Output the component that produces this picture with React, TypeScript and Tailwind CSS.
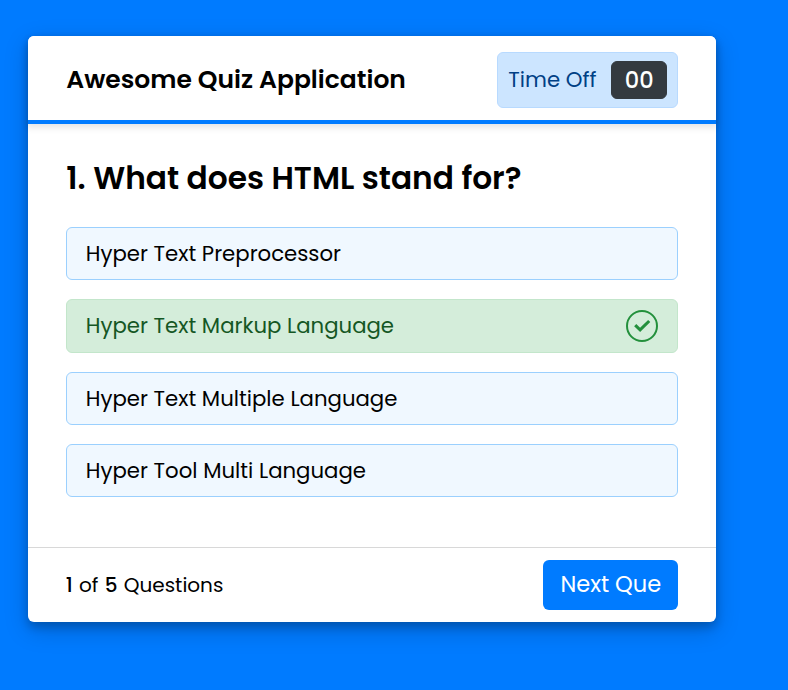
const options = [
  { text: 'Hyper Text Preprocessor', correct: false },
  { text: 'Hyper Text Markup Language', correct: true },
  { text: 'Hyper Text Multiple Language', correct: false },
  { text: 'Hyper Tool Multi Language', correct: false },
];

function CheckIcon() {
  return (
    <svg width="32" height="32" viewBox="0 0 32 32" fill="none" className="shrink-0">
      <circle cx="16" cy="16" r="15" stroke="#23903c" strokeWidth="2" />
      <path d="M9.2 15.2 L14.1 19.8 L23.2 11" stroke="#23903c" strokeWidth="3.1" />
    </svg>
  );
}

export default function App() {
  return (
    <main className="h-[690px] w-[788px] overflow-hidden bg-[#007bff] pl-[28.3px] pt-[36px] font-['Poppins','Inter',sans-serif] text-black">
      <section className="flex h-[586.3px] w-[688px] flex-col rounded-[6px] bg-white shadow-[0_5px_10px_rgba(0,0,0,0.2),0_7.5px_25px_rgba(0,0,0,0.19)]">
        <header className="flex h-[88px] shrink-0 items-center justify-between rounded-t-[6px] border-b-4 border-[#007bff] bg-white px-[38px] pt-[4px] shadow-[0_3px_6px_1px_rgba(0,0,0,0.1)]">
          <h1 className="whitespace-nowrap pb-[2px] text-[25px] leading-none font-semibold">Awesome Quiz Application</h1>
          <div className="flex h-[56px] w-[181px] items-center justify-between rounded-[6px] border border-[#b8daff] bg-[#cce5ff] px-[10px]">
            <span className="whitespace-nowrap text-[21.25px] text-[#004085]">Time Off</span>
            <span className="flex h-[38px] w-[56px] items-center justify-center rounded-[6px] border border-[#343a40] bg-[#343a40] pt-[2px] text-[22.5px] font-medium text-white">00</span>
          </div>
        </header>
        <div className="flex grow flex-col px-[38px] pt-[32px]">
          <h2 className="flex h-[44px] items-center whitespace-nowrap pt-[2px] text-[31.25px] leading-none font-semibold">1. What does HTML stand for?</h2>
          <div className="mt-[26.9px] flex flex-col gap-[19.1px]">
            {options.map((o) => (
              <div
                key={o.text}
                className={`flex h-[53.3px] items-center justify-between rounded-[6px] border pl-[18.5px] pr-[19px] pt-[0.6px] text-[21.25px] ${
                  o.correct ? 'border-[#c3e6cb] bg-[#d4edda] text-[#155724]' : 'border-[#9bd0fe] bg-[#f0f8ff]'
                }`}
              >
                <span className="whitespace-nowrap">{o.text}</span>
                {o.correct && <CheckIcon />}
              </div>
            ))}
          </div>
        </div>
        <footer className="flex h-[75.3px] shrink-0 items-center justify-between border-t border-[#d8d8d8] pl-[37.5px] pr-[38px]">
          <p className="flex gap-[6.25px] whitespace-nowrap text-[20px]">
            <b className="font-medium">1</b>
            <span>of</span>
            <b className="font-medium">5</b>
            <span>Questions</span>
          </p>
          <button className="h-[50px] w-[135px] whitespace-nowrap rounded-[6px] bg-[#007bff] pb-[2px] text-[22.5px] leading-none text-white">Next Que</button>
        </footer>
      </section>
    </main>
  );
}
